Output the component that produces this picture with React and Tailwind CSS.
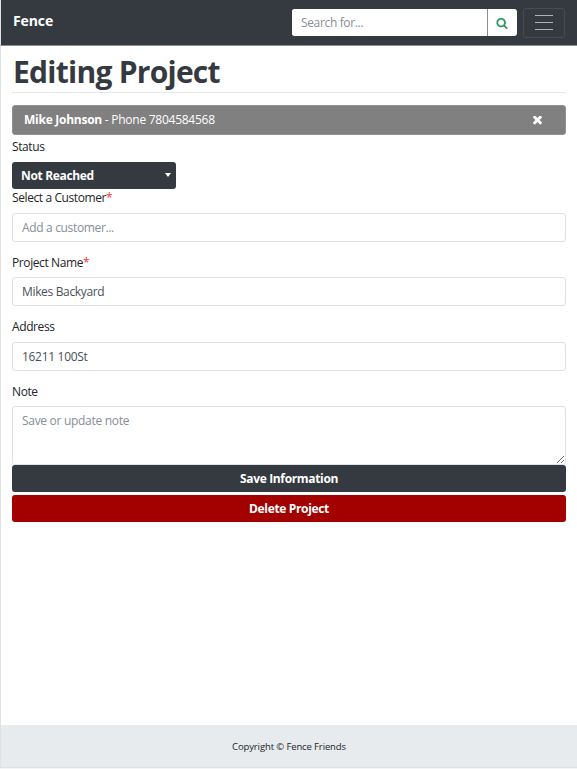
function SearchIcon() {
  return (
    <svg viewBox="0 0 1792 1792" className="h-[12px] w-[12px]" fill="currentColor">
      <path d="M1216 832q0-185-131.5-316.5t-316.5-131.5-316.5 131.5-131.5 316.5 131.5 316.5 316.5 131.5 316.5-131.5 131.5-316.5zm512 832q0 52-38 90t-90 38q-54 0-90-38l-343-342q-179 124-399 124-143 0-273.5-55.5t-225-150-150-225-55.5-273.5 55.5-273.5 150-225 225-150 273.5-55.5 273.5 55.5 225 150 150 225 55.5 273.5q0 220-124 399l343 343q37 37 37 90z" />
    </svg>
  );
}

function CloseIcon() {
  return (
    <svg viewBox="110 434 1188 1188" className="h-[9px] w-[9px]" fill="currentColor">
      <path d="M1298 1322q0 40-28 68l-136 136q-28 28-68 28t-68-28l-294-294-294 294q-28 28-68 28t-68-28l-136-136q-28-28-28-68t28-68l294-294-294-294q-28-28-28-68t28-68l136-136q28-28 68-28t68 28l294 294 294-294q28-28 68-28t68 28l136 136q28 28 28 68t-28 68l-294 294 294 294q28 28 28 68z" />
    </svg>
  );
}

function Field({ label, required, className = "", children }) {
  return (
    <div className={className}>
      <label className="flex h-[18px] items-center text-[12px] leading-[18px] tracking-[-0.4px] text-[#212529]">
        {label}
        {required && <span className="text-[#ff3030]">*</span>}
      </label>
      {children}
    </div>
  );
}

const inputClass =
  "block w-full rounded-[3px] border border-[#dfe1e3] bg-white px-[9px] text-[12px] text-[#495057] placeholder:text-[#868e96] outline-none";

export default function App() {
  return (
    <div className="h-[769px] w-[577px] overflow-hidden bg-[#f4f5f5] font-['Open_Sans','Noto_Sans',sans-serif]">
      <div className="flex h-[768px] flex-col border-b border-l border-[#dfe1e3] bg-white">
        <header className="-ml-px flex h-[46px] shrink-0 items-center border-b border-l border-[#8b8f93] border-l-[#dfe1e3] bg-[#343a40] pl-3 pr-[12px]">
          <span className="mb-[4px] text-[14px] font-bold tracking-[-0.1px] text-white">Fence</span>
          <div className="ml-auto flex h-[27px] w-[225px] overflow-hidden rounded-[3px] bg-white">
            <input
              className="w-[195px] bg-white px-[9px] text-[12px] tracking-[-0.35px] outline-none placeholder:text-[#868e96]"
              placeholder="Search for..."
            />
            <button className="flex flex-1 items-center justify-center border-l border-[#8b8f93] pr-px text-[#28965f]">
              <SearchIcon />
            </button>
          </div>
          <button className="ml-[6px] flex h-[30px] w-[42px] flex-col items-center justify-center gap-[6px] rounded-[3px] border border-[#464c52]">
            <span className="h-px w-[18px] bg-[#b0b3b5]" />
            <span className="h-px w-[18px] bg-[#b0b3b5]" />
            <span className="h-px w-[18px] bg-[#b0b3b5]" />
          </button>
        </header>

        <main className="flex-1 px-[11px]">
          <h1 className="flex h-[47px] items-center border-b border-[#e5e6e7] pl-px text-[30px] font-bold leading-none tracking-[-0.74px] text-[#343a40]">
            <span className="mb-[-6px]">Editing Project</span>
          </h1>

          <div className="mt-[12px] flex h-[30px] items-center justify-between rounded-[3px] border border-[#929292] bg-[#808080] pl-[11px] pr-[23px] text-[12px] text-white">
            <p className="whitespace-pre tracking-[-0.26px]">
              <b>Mike Johnson</b> - Phone 7804584568
            </p>
            <CloseIcon />
          </div>

          <Field label="Status" className="mt-[3px]">
            <button className="mt-[6px] flex h-[27px] w-[164px] items-center justify-between rounded-[3px] bg-[#343a40] pl-[9px] pr-[5px] text-[12px] font-bold tracking-[-0.34px] text-white">
              Not Reached
              <span className="mb-px border-x-[3.5px] border-t-[4px] border-x-transparent border-t-white" />
            </button>
          </Field>

          <Field label="Select a Customer" required>
            <input className={inputClass + " mt-[6px] h-[29px] tracking-[-0.34px]"} placeholder="Add a customer..." />
          </Field>
          <Field label="Project Name" required className="mt-[12px]">
            <input className={inputClass + " mt-[5px] h-[29px] tracking-[-0.34px]"} defaultValue="Mikes Backyard" />
          </Field>
          <Field label="Address" className="mt-[12px]">
            <input className={inputClass + " mt-[6px] h-[29px] tracking-[-0.3px]"} defaultValue="16211 100St" />
          </Field>
          <Field label="Note" className="mt-[12px]">
            <textarea
              className={inputClass + " mt-[5px] h-[59px] resize py-[5px] leading-[18px] tracking-[-0.3px]"}
              placeholder="Save or update note"
            />
          </Field>

          <button className="block h-[27px] w-full rounded-[3px] bg-[#343a40] text-[12px] font-bold tracking-[-0.34px] text-white">
            Save Information
          </button>
          <button className="mt-[3px] block h-[27px] w-full rounded-[3px] bg-[#a30000] text-[12px] font-bold tracking-[-0.34px] text-white">
            Delete Project
          </button>
        </main>

        <footer className="flex h-[42px] shrink-0 items-center justify-center bg-[#e7ebee] pt-[2px] text-[9.5px] tracking-[-0.12px] text-[#212529]">
          Copyright © Fence Friends
        </footer>
      </div>
    </div>
  );
}
